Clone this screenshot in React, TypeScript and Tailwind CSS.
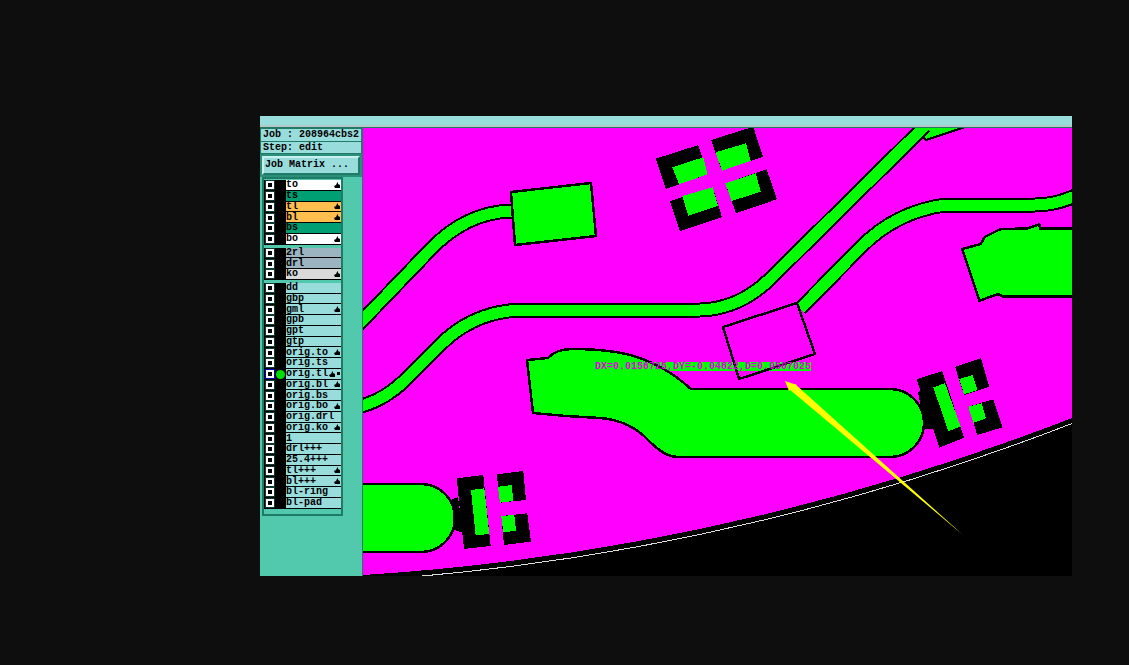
import React from 'react';

type Layer = { name: string; bar?: string; mark?: boolean; active?: boolean };

const boardLayers: Layer[] = [
  { name: 'to', bar: 'bg-white', mark: true },
  { name: 'ts', bar: 'bg-[#009e73]' },
  { name: 'tl', bar: 'bg-[#ffbe4d]', mark: true },
  { name: 'bl', bar: 'bg-[#ffbe4d]', mark: true },
  { name: 'bs', bar: 'bg-[#009e73]' },
  { name: 'bo', bar: 'bg-white', mark: true },
];

const drillLayers: Layer[] = [
  { name: '2rl', bar: 'bg-[#9bb4bf]' },
  { name: 'drl', bar: 'bg-[#9bb4bf]' },
  { name: 'ko', bar: 'bg-[#d9d9d9]', mark: true },
];

const miscLayers: Layer[] = [
  { name: 'dd' },
  { name: 'gbp' },
  { name: 'gml', mark: true },
  { name: 'gpb' },
  { name: 'gpt' },
  { name: 'gtp' },
  { name: 'orig.to', mark: true },
  { name: 'orig.ts' },
  { name: 'orig.tl', mark: true, active: true },
  { name: 'orig.bl', mark: true },
  { name: 'orig.bs' },
  { name: 'orig.bo', mark: true },
  { name: 'orig.drl' },
  { name: 'orig.ko', mark: true },
  { name: '1' },
  { name: 'drl+++' },
  { name: '25.4+++' },
  { name: 'tl+++', mark: true },
  { name: 'bl+++', mark: true },
  { name: 'bl-ring' },
  { name: 'bl-pad' },
];

// small pointer glyph at the end of a layer bar
const Mark = () => (
  <svg width="6" height="6" viewBox="0 0 6 6" className="shrink-0">
    <path d="M0 4L2 3L3 1L4 0L4 2L6 3V6H1Z" fill="#000" />
  </svg>
);

const LayerRow = ({ layer }: { layer: Layer }) => (
  <div className="flex h-[10.75px] items-stretch">
    <div className="flex w-[22px] shrink-0 items-center bg-black pl-[1px]">
      <div
        className={`flex h-[10px] w-[10px] shrink-0 items-center justify-center ${
          layer.active ? 'bg-[#0000c8]' : 'bg-[#0c3a30]'
        }`}
      >
        <div className="h-[8px] w-[8px] border-2 border-white bg-black" />
      </div>
      {layer.active && <div className="ml-[1px] h-[9px] w-[9px] rounded-full bg-[#00e000]" />}
    </div>
    <div
      className={`flex flex-1 items-center justify-between border-b border-black pr-[1px] ${
        layer.bar ?? 'bg-[#99dcdc]'
      }`}
    >
      <span className="pt-[1px] font-['Liberation_Mono',monospace] text-[10px] leading-none font-bold text-black">
        {layer.name}
      </span>
      <span className="flex items-center gap-[2px]">
        {layer.mark && <Mark />}
        {layer.active && <span className="h-[3px] w-[3px] bg-black" />}
      </span>
    </div>
  </div>
);

const LayerGroup = ({ layers }: { layers: Layer[] }) => (
  <div className="mb-[3px] flex flex-col bg-black">
    {layers.map((l) => (
      <LayerRow key={l.name} layer={l} />
    ))}
  </div>
);

const Board = () => (
  <svg viewBox="363 128 709 448" className="block h-full w-full" shapeRendering="crispEdges">
    <rect x="363" y="128" width="709" height="448" fill="#ff00ff" />
    <path d="M363 575 Q726 552 1072 418 L1072 576 L363 576 Z" fill="#000" />
    <path d="M363 580.5 Q726 557.5 1072 423.5" fill="none" stroke="#dcdcdc" strokeWidth="1" />

    <polygon points="915,126 968,126 926,140 922,136" fill="#00ff00" stroke="#000" strokeWidth="2" />

    {/* traces */}
    <g fill="none" strokeLinejoin="round">
      <path d="M358 325 L430 250 Q465 213 510 211 L515 211" stroke="#000" strokeWidth="15" />
      <path d="M358 325 L430 250 Q465 213 510 211 L515 211" stroke="#00ff00" strokeWidth="11" />
      <path d="M358 407 Q385 400 405 380 L440 345 Q475 310 525 310 L700 310 Q740 309 772 277 L925 126" stroke="#000" strokeWidth="15" />
      <path d="M358 407 Q385 400 405 380 L440 345 Q475 310 525 310 L700 310 Q740 309 772 277 L925 126" stroke="#00ff00" strokeWidth="11" />
      <path d="M800 309 L860 248 Q895 212 945 205 L1035 205 Q1055 205 1075 196" stroke="#000" strokeWidth="15" />
      <path d="M800 309 L860 248 Q895 212 945 205 L1035 205 Q1055 205 1075 196" stroke="#00ff00" strokeWidth="11" />
    </g>

    <polygon points="511,192 591,183 596,236 515,245" fill="#00ff00" stroke="#000" strokeWidth="2.5" />
    <polygon points="723,327 797,303 815,354 739,379" fill="#ff00ff" />

    {/* readout strip lies under the outlines */}
    <rect x="595" y="362" width="216" height="9" fill="#00ff00" />
    <polygon points="723,327 797,303 815,354 739,379" fill="none" stroke="#000" strokeWidth="2.5" />

    {/* copper areas */}
    <path
      d="M527 360 L548 358 Q556 349 572 349 C610 349 650 352 691 389 L890 389 A34 34 0 0 1 890 457 L678 457 Q665 457 650 442 Q630 420 600 418 L566 416 L533 413 Z"
      fill="#00ff00"
      stroke="#000"
      strokeWidth="2.5"
    />
    <path d="M358 484 L421 484 A34 34 0 0 1 421 552 L358 552 Z" fill="#00ff00" stroke="#000" strokeWidth="2.5" />
    <polygon
      points="962.3,249 980.7,244 985,236.7 1000,229.3 1028,228.3 1039.3,224.3 1040,228.3 1076,228.3 1076,296.7 1003.3,296.7 998.3,294 979.3,300.7"
      fill="#00ff00"
      stroke="#000"
      strokeWidth="2.5"
    />

    {/* pad cluster, top */}
    <g fill="#000">
      <polygon points="655.7,158.7 698.3,145 707.7,174.3 665.7,189" />
      <polygon points="711,140 753.3,126.7 763,156.7 722,170.7" />
      <polygon points="670,201 712.7,187.3 722,217.3 680,231" />
      <polygon points="725.3,183.3 766.7,169.3 777,199.3 736,213.3" />
    </g>
    <g fill="#00ff00">
      <polygon points="672.3,167.3 703.3,157.3 707.7,174.3 679,184.3" />
      <polygon points="715.7,152.3 746,143.3 750.7,161 722,170.7" />
      <polygon points="682.3,196 712.7,187.3 718,206 688.3,215.7" />
      <polygon points="725.3,183.3 755.7,173.3 760.7,191.7 731.7,201" />
    </g>

    {/* pad cluster, right */}
    <g fill="#000">
      <polygon points="918,392 935,385 945,430 925,429" />
      <polygon points="916.7,379.3 942.3,371 964,437.7 939.3,447.7" />
      <polygon points="955,366.7 981,358.3 989.3,386.7 964,395" />
      <polygon points="968.3,406.7 993.3,399.3 1002.7,427.3 977.3,435" />
    </g>
    <g fill="#00ff00">
      <polygon points="933.3,387.3 945,383.3 960.7,426.7 948.3,431" />
      <polygon points="959.3,379 972.7,375 977.3,390 964,394.3" />
      <polygon points="968.3,406.7 981.7,403.3 986,418.3 973.3,422.7" />
    </g>

    {/* pad cluster, bottom left */}
    <g fill="#000">
      <polygon points="451.7,499.3 458,497 463,533 454,530" />
      <polygon points="456.7,478.3 483.3,475 490.7,546 464,549" />
      <polygon points="496.7,474.3 523.3,471 526,500 500,502.7" />
      <polygon points="501.3,516 527.3,513.3 531,541.7 504,545" />
    </g>
    <g fill="#00ff00">
      <polygon points="471,490 484.3,488.3 489.3,534 475.7,535.3" />
      <polygon points="498,486.7 511.7,485 513.3,501 500,502.7" />
      <polygon points="501.3,516 514.3,515 516,530.7 503.3,532.3" />
    </g>

    {/* measure arrow */}
    <g shapeRendering="auto">
      <polygon points="789,389 795,384 963,535" fill="#ffff00" />
      <polygon points="785,381 797,385 789,391" fill="#ffff00" />
    </g>
  </svg>
);

export default function App() {
  return (
    <div className="flex h-[665px] w-full items-start bg-[#0e0e0e] pl-[260px] pt-[116px]">
      <div className="flex h-[460px] w-[812px] flex-col">
        <div className="h-[11px] shrink-0 border-b-2 border-[#b4c8c8] bg-[#99dcdc]" />
        <div className="h-[1px] shrink-0 bg-[#1f7a66]" />
        <div className="flex min-h-0 flex-1">
          <div className="flex w-[103px] shrink-0 flex-col border-r border-[#1f7a66] bg-[#52c9ac]">
            <div className="bg-[#1f7a66] p-[1px] font-['Liberation_Mono',monospace] text-[10px] leading-none font-bold text-black">
              <div className="flex h-[12px] items-center whitespace-nowrap bg-[#99dcdc] pl-[2px]">Job : 208964cbs2</div>
              <div className="mt-[1px] flex h-[11px] items-center whitespace-nowrap bg-[#99dcdc] pl-[2px]">Step: edit</div>
            </div>
            <div className="h-[23px] shrink-0 bg-[#2a8f78] p-[2px]">
              <div className="flex h-[19px] items-center border-2 border-[#c8f0f0] border-b-[#1f7a66] border-r-[#1f7a66] bg-[#99dcdc] pb-[1px] pl-[1px] font-['Liberation_Mono',monospace] text-[10px] leading-none font-bold text-black">
                Job Matrix ...
              </div>
            </div>
            <div className="flex min-h-0 flex-1">
              <div className="ml-[2px] w-[81px] self-start border-2 border-[#1f7a66] bg-[#52c9ac] pb-[2px] pt-[1px]">
                <LayerGroup layers={boardLayers} />
                <LayerGroup layers={drillLayers} />
                <LayerGroup layers={miscLayers} />
              </div>
            </div>
          </div>
          <div className="relative min-w-0 flex-1">
            <Board />
            <span className="absolute left-[232px] top-[234px] flex h-[9px] items-center whitespace-nowrap font-['Liberation_Mono',monospace] text-[10px] leading-none font-bold text-[#e000e0]">
              DX=0.0156725,DY=-0.04822,D=0.0507025
            </span>
          </div>
        </div>
      </div>
    </div>
  );
}
